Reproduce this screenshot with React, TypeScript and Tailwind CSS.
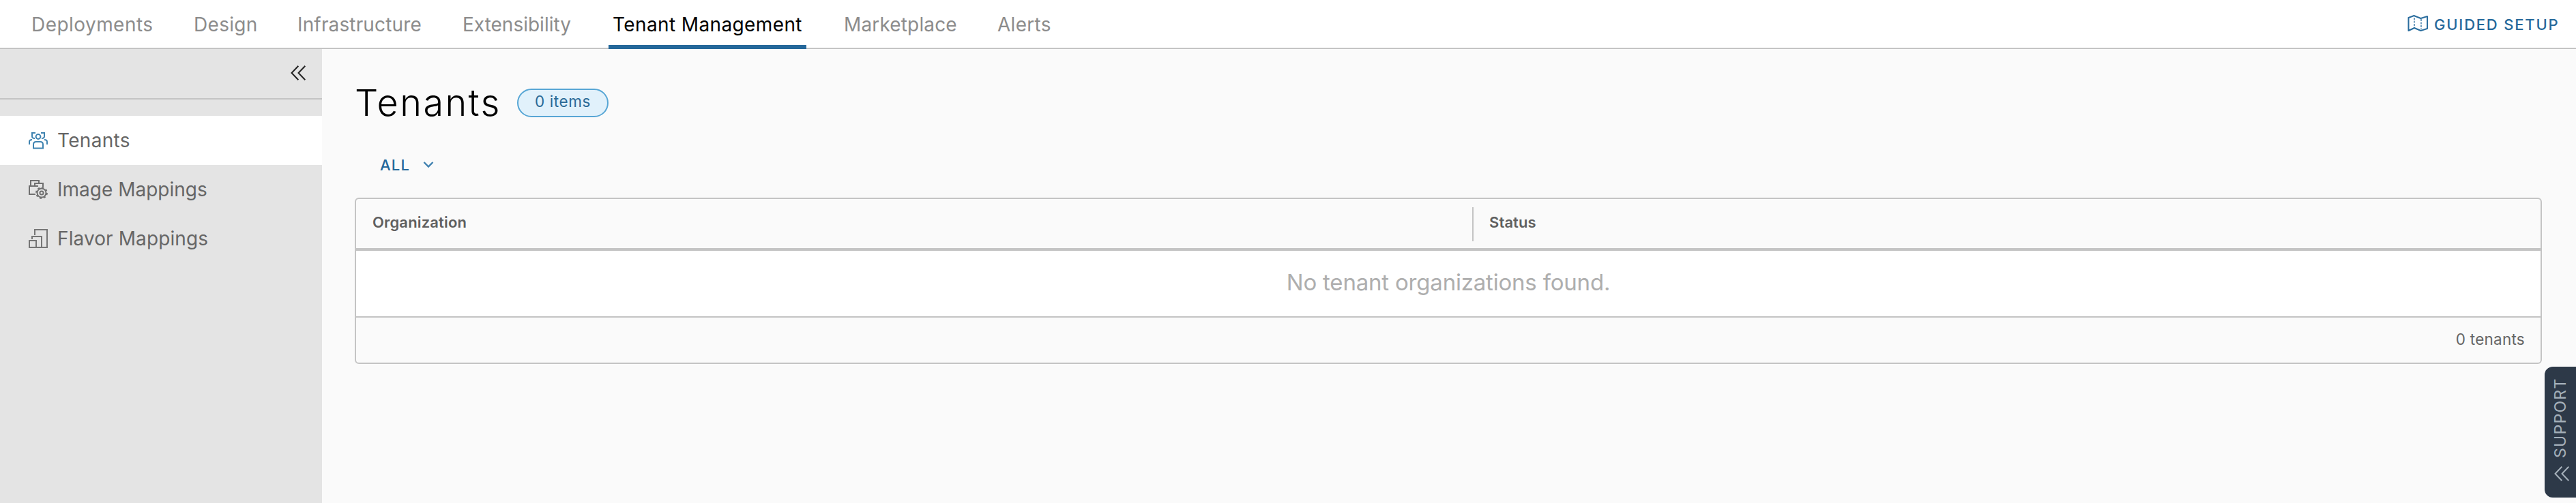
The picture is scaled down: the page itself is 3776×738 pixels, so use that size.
import React from "react";
import { clsx } from "clsx";

const tabs = [
  { label: "Deployments", size: "w-[238px]", track: "tracking-[0.45px]" },
  { label: "Design", size: "w-[152px]", track: "tracking-[0.3px]" },
  { label: "Infrastructure", size: "w-[242px]", track: "tracking-[0.15px]" },
  { label: "Extensibility", size: "w-[220px]", track: "" },
  { label: "Tenant Management", size: "w-[339px]", track: "tracking-[0.38px]", active: true },
  { label: "Marketplace", size: "w-[225px]", track: "tracking-[0.15px]" },
  { label: "Alerts", size: "w-[100px]", track: "tracking-[0.3px]" },
];

function MapIcon() {
  return (
    <svg className="h-[26px] w-[32px] shrink-0" viewBox="0 0 32 26" fill="none" stroke="#2a6d9e" strokeWidth="2">
      <path d="M2.5 5 L10.5 2 L20.5 6 L30 3 V21 L20.5 24 L11 20 L2.5 24 Z" strokeLinejoin="round" />
      <path d="M11 5 V20 M21 7 V22" strokeDasharray="3 1.5" opacity=".65" />
    </svg>
  );
}

function DoubleChevron({ className }: { className: string }) {
  return (
    <svg className={className} viewBox="0 0 22 22" fill="none" stroke="currentColor" strokeWidth="2">
      <path d="M11.3 0.8 L1.5 11 L11.3 21.2 M21.3 0.8 L11.5 11 L21.3 21.2" />
    </svg>
  );
}

function TenantsIcon() {
  return (
    <svg className="h-[28px] w-[28px]" viewBox="0 0 28 28" fill="none" stroke="#3f83b0" strokeWidth="2">
      <circle cx="14" cy="8.5" r="3.4" />
      <path d="M7 25.5 V20 Q7 16 11 16 H17 Q21 16 21 20 V25.5 Z" />
      <path d="M10 3 H5 V8 Q5 11 9 11 M18 3 H23 V8 Q23 11 19 11" />
      <path d="M1 20 V16 Q1 13 5 13 M27 20 V16 Q27 13 23 13" />
    </svg>
  );
}

function ImageIcon() {
  return (
    <svg className="h-[28px] w-[28px]" viewBox="0 0 28 28" fill="none" stroke="#707070" strokeWidth="2">
      <path d="M3 9 V1 H15 V5" />
      <path d="M10 21 H1 V9 H9 V5 H21 V10" />
      <path d="M9 9 H14" />
      <circle cx="19" cy="19" r="6.5" />
      <circle cx="19" cy="19" r="8" strokeDasharray="3 3.28" strokeWidth="1.8" />
      <circle cx="19" cy="19" r="2.6" />
    </svg>
  );
}

function FlavorIcon() {
  return (
    <svg className="h-[28px] w-[28px]" viewBox="0 0 28 28" fill="none" stroke="#767676" strokeWidth="2">
      <path d="M9 9 V1 H27 V27 H1 V17 H11 V27" />
      <path d="M5 15 V11 H19 V27" />
    </svg>
  );
}

const links = [
  { label: "Tenants", icon: <TenantsIcon />, track: "tracking-[0.3px]", active: true },
  { label: "Image Mappings", icon: <ImageIcon />, track: "" },
  { label: "Flavor Mappings", icon: <FlavorIcon />, track: "tracking-[0.1px]" },
];

export default function App() {
  return (
    <div className="relative flex h-[738px] w-[3776px] flex-col overflow-hidden bg-[#fafafa] font-['Inter','Open_Sans',sans-serif] whitespace-nowrap text-[#666]">
      <header className="flex h-[72px] shrink-0 justify-between border-b-2 border-[#c4c4c4] bg-white">
        <nav className="flex pl-[40px] text-[28px] leading-[72px] text-[#8c8c8c]">
          {tabs.map((t) => (
            <div key={t.label} className={clsx("h-[72px] shrink-0", t.size)}>
              <a className={clsx("block h-[72px] pl-[6px]", t.track, t.active && "w-[290px] border-b-[6px] border-[#25689a] text-black")}>{t.label}</a>
            </div>
          ))}
        </nav>
        <div className="flex h-[72px] pt-[21px] text-[22px] leading-[30px] font-medium text-[#25689a]">
          <MapIcon />
          <span className="ml-[8px] w-[208px] tracking-[1.8px]">GUIDED SETUP</span>
        </div>
      </header>
      <div className="flex min-h-0 flex-1">
        <aside className="w-[472px] shrink-0 bg-[#e4e4e4]">
          <div className="flex h-[74px] justify-end border-b-2 border-[#c4c4c4] pt-[24px] pr-[24px] text-[#222]">
            <DoubleChevron className="h-[22px] w-[22px]" />
          </div>
          <div className="pt-[24px]">
            {links.map((l) => (
              <a key={l.label} className={clsx("flex h-[72px] items-center pl-[42px] text-[28px] leading-[72px]", l.active && "bg-white")}>
                {l.icon}
                <span className={clsx("ml-[14px]", l.track)}>{l.label}</span>
              </a>
            ))}
          </div>
        </aside>
        <main className="flex flex-1 flex-col pt-[58px] pr-[50px] pl-[48px]">
          <div className="flex h-[60px]">
            <h1 className="w-[238px] text-[54px] leading-[41px] font-light tracking-[2.4px] text-black">Tenants</h1>
            <span className="h-[42px] w-[134px] rounded-full border-2 border-[#57a6d5] bg-[#e1f1fb] text-center text-[22.5px] leading-[33px] tracking-[0.6px] text-[#2a6a97]">0 items</span>
          </div>
          <div className="flex h-[100px] items-start pt-[35px] pl-[37px] text-[22px] leading-[34px] font-medium text-[#25689a]">
            <span className="w-[63px] tracking-[1.2px]">ALL</span>
            <svg className="mt-[11px] h-[11px] w-[16px]" viewBox="0 0 16 11" fill="none" stroke="#3f80af" strokeWidth="2.4">
              <path d="M1.5 2 L8 8.5 L14.5 2" />
            </svg>
          </div>
          <section className="flex h-[244px] w-[3206px] flex-col rounded-[6px] border-2 border-[#c4c4c4]">
            <div className="flex h-[76px] border-b-4 border-[#c4c4c4] pt-[12px] text-[22px] font-semibold leading-[44px] text-[#5f5f5f]">
              <div className="h-[50px] w-[1638px] border-r-2 border-[#c4c4c4] pl-[24px] tracking-[0.15px]">Organization</div>
              <div className="pl-[23px] tracking-[0.1px]">Status</div>
            </div>
            <div className="h-[98px] border-b-2 border-[#c4c4c4] bg-white text-center text-[33px] leading-[92px] tracking-[-0.2px] text-[#aeaeae]">No tenant organizations found.</div>
            <div className="h-[66px] pr-[23px] text-right text-[22.5px] leading-[64px] tracking-[0.25px]">0 tenants</div>
          </section>
        </main>
      </div>
      <div className="absolute top-[538px] right-0 flex h-[192px] w-[46px] flex-col items-center rounded-l-[12px] bg-[#2d3948] pt-[16px] text-[#a5b0ba]">
        <span className="h-[118px] rotate-180 text-[23px] leading-[46px] tracking-[1.3px] [writing-mode:vertical-rl]">SUPPORT</span>
        <DoubleChevron className="mt-[12px] ml-[4px] h-[22px] w-[22px]" />
      </div>
    </div>
  );
}
